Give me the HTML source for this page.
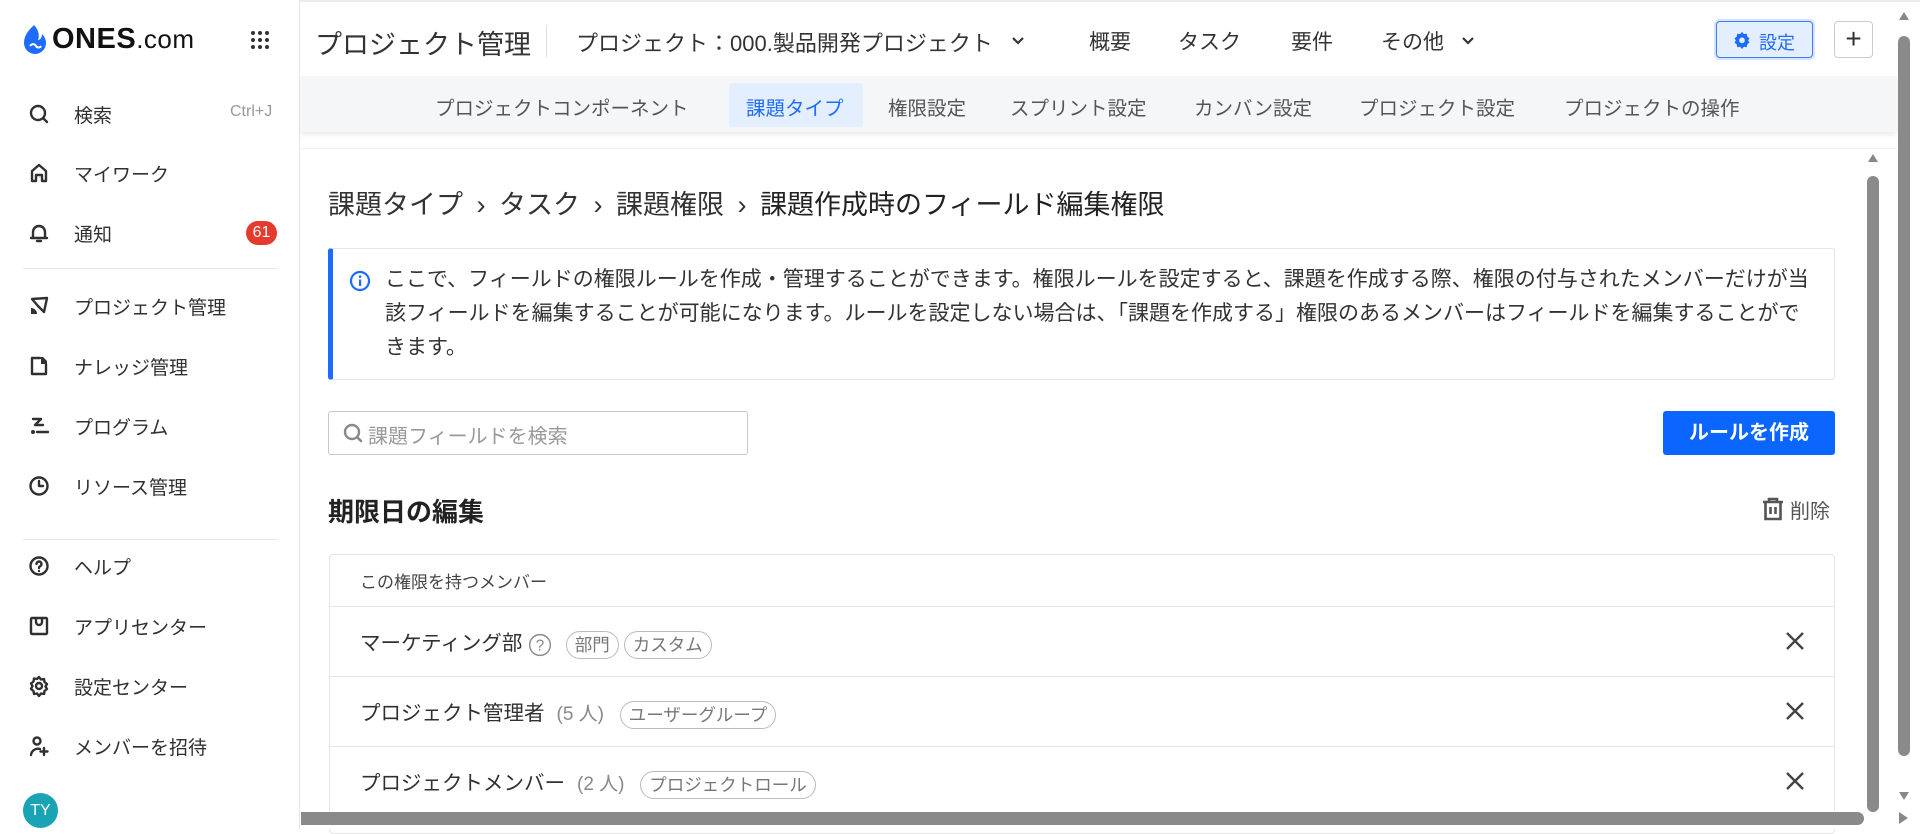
<!DOCTYPE html>
<html><head><meta charset="utf-8">
<style>
*{box-sizing:border-box;margin:0;padding:0}
body{width:1920px;height:829px;overflow:hidden;background:#fff;font-family:"Liberation Sans","Noto Sans CJK JP",sans-serif;color:#303030;position:relative}
.a{position:absolute;white-space:nowrap}
.side{left:0;top:0;width:300px;height:829px;border-right:1px solid #e6e6e6;background:#fff}
.nav{left:0;width:300px;height:40px;font-size:19px;color:#303030}
.nav svg{position:absolute;left:28px;top:9px}
.nav span{position:absolute;left:74px;top:7px}
.hr{height:1px;background:#e8e8e8}
.ic{stroke:#303030;stroke-width:2.4;fill:none;stroke-linecap:round;stroke-linejoin:round}
.sub{font-size:19.5px;color:#555;top:92px}
.row{left:329px;width:1506px;border-top:1px solid #e5e5e5;height:70px}
.tag{display:inline-block;border:1px solid #bbb;border-radius:14px;padding:0 8px;font-size:17.5px;color:#777;height:28px;line-height:26px;margin-left:5px;vertical-align:middle}
.cnt{color:#888;font-size:19px;margin-left:12px}
.x{position:absolute;right:30px;top:24px}
</style></head><body>
<div style="position:absolute;left:0;top:0;width:1920px;height:2px;background:#ececec"></div>
<!-- sidebar -->
<div class="a side">
  <svg class="a" style="left:22px;top:24px" width="28" height="32" viewBox="0 0 28 32"><path d="M12 1C7 6 2 11 2 19a11 11 0 0 0 22 0c0-4-2-7-4-9 0 4-2 6-4 6 2-5 0-11-4-15z" fill="#1e6bff"/><path d="M8 22c2-3 5-2 6 0 1 2 4 2 5 0" stroke="#fff" stroke-width="2" fill="none"/></svg>
  <div class="a" style="left:52px;top:23px;font-size:29px;font-weight:bold;color:#111;letter-spacing:0.5px">ONES<span style="font-weight:normal;font-size:26px">.com</span></div>
  <svg class="a" style="left:250px;top:30px" width="20" height="20" viewBox="0 0 20 20" fill="#333"><circle cx="3" cy="3" r="2"/><circle cx="10" cy="3" r="2"/><circle cx="17" cy="3" r="2"/><circle cx="3" cy="10" r="2"/><circle cx="10" cy="10" r="2"/><circle cx="17" cy="10" r="2"/><circle cx="3" cy="17" r="2"/><circle cx="10" cy="17" r="2"/><circle cx="17" cy="17" r="2"/></svg>

  <div class="a nav" style="top:94px"><svg width="22" height="22" viewBox="0 0 22 22"><circle class="ic" cx="10" cy="10" r="7"/><path class="ic" d="M15 15l4 4"/></svg><span>検索</span><span style="left:230px;top:9px;font-size:16px;color:#999">Ctrl+J</span></div>
  <div class="a nav" style="top:153px"><svg width="22" height="22" viewBox="0 0 22 22"><path class="ic" d="M4 19V9l7-6 7 6v10h-4v-6h-6v6z"/></svg><span>マイワーク</span></div>
  <div class="a nav" style="top:213px"><svg width="22" height="22" viewBox="0 0 22 22"><path class="ic" d="M5 16V10a6 6 0 0 1 12 0v6M3 16h16M9 19h4"/></svg><span>通知</span><div class="a" style="left:246px;top:8px;width:31px;height:24px;border-radius:12px;background:#e53b2f;color:#fff;font-size:16px;text-align:center;line-height:24px">61</div></div>
  <div class="a hr" style="left:23px;top:268px;width:255px"></div>
  <div class="a nav" style="top:286px"><svg width="22" height="22" viewBox="0 0 22 22"><path class="ic" d="M4 4l15-1-3 14-6-6z"/><path d="M3 13a6 6 0 0 1 6 6H3z" fill="#303030"/></svg><span>プロジェクト管理</span></div>
  <div class="a nav" style="top:346px"><svg width="22" height="22" viewBox="0 0 22 22"><path class="ic" d="M12 3H4v16h14V9"/><path d="M13 2h2l4 4v3h-6z" fill="#303030"/></svg><span>ナレッジ管理</span></div>
  <div class="a nav" style="top:406px"><svg width="22" height="22" viewBox="0 0 22 22"><path class="ic" d="M5 4h8l-6 6h8M9 17h11"/><circle cx="5" cy="17" r="2" fill="#303030"/></svg><span>プログラム</span></div>
  <div class="a nav" style="top:466px"><svg width="22" height="22" viewBox="0 0 22 22"><circle class="ic" cx="11" cy="11" r="8.5"/><path class="ic" d="M11 6v5h4"/></svg><span>リソース管理</span></div>
  <div class="a hr" style="left:23px;top:539px;width:255px"></div>
  <div class="a nav" style="top:546px"><svg width="22" height="22" viewBox="0 0 22 22"><circle class="ic" cx="11" cy="11" r="8.5"/><path class="ic" d="M8.5 9a2.5 2.5 0 1 1 3.5 2.3c-.7.4-1 .9-1 1.7"/><circle cx="11" cy="16" r="1.2" fill="#303030"/></svg><span>ヘルプ</span></div>
  <div class="a nav" style="top:606px"><svg width="22" height="22" viewBox="0 0 22 22"><rect class="ic" x="3" y="3" width="16" height="16" rx="1"/><path class="ic" d="M8 4v3a3 3 0 0 0 6 0V4"/></svg><span>アプリセンター</span></div>
  <div class="a nav" style="top:666px"><svg width="22" height="22" viewBox="0 0 22 22"><path class="ic" d="M11 2l2 2.5 3-.5.5 3 2.5 2-1.5 2.5 1.5 2.5-2.5 2-.5 3-3-.5-2 2.5-2-2.5-3 .5-.5-3-2.5-2L4.5 11 3 8.5l2.5-2 .5-3 3 .5z"/><circle class="ic" cx="11" cy="11" r="3"/></svg><span>設定センター</span></div>
  <div class="a nav" style="top:726px"><svg width="22" height="22" viewBox="0 0 22 22"><circle class="ic" cx="9" cy="6" r="3.5"/><path class="ic" d="M3 20a7 7 0 0 1 9-6M16 13v7M12.5 16.5h7"/></svg><span>メンバーを招待</span></div>
  <div class="a" style="left:23px;top:793px;width:35px;height:35px;border-radius:50%;background:#1aa3b5;color:#fff;font-size:16px;text-align:center;line-height:35px">TY</div>
</div>

<!-- top header -->
<div class="a" style="left:315px;top:23px;font-size:27px;color:#333">プロジェクト管理</div>
<div class="a" style="left:546px;top:25px;width:1px;height:32px;background:#ddd"></div>
<div class="a" style="left:576px;top:26px;font-size:22px;color:#333">プロジェクト：000.製品開発プロジェクト</div>
<svg class="a" style="left:1010px;top:32px" width="16" height="16" viewBox="0 0 16 16"><path d="M3 6l5 5 5-5" stroke="#333" stroke-width="2.2" fill="none"/></svg>
<div class="a" style="left:1089px;top:26px;font-size:21px;color:#333">概要</div>
<div class="a" style="left:1178px;top:26px;font-size:21px;color:#333">タスク</div>
<div class="a" style="left:1291px;top:26px;font-size:21px;color:#333">要件</div>
<div class="a" style="left:1381px;top:26px;font-size:21px;color:#333">その他</div>
<svg class="a" style="left:1460px;top:32px" width="16" height="16" viewBox="0 0 16 16"><path d="M3 6l5 5 5-5" stroke="#333" stroke-width="2.2" fill="none"/></svg>
<div class="a" style="left:1716px;top:21px;width:97px;height:37px;border:1.5px solid #3d7bf5;border-radius:4px;background:#e3eeff;box-shadow:0 0 0 2px #d4e4ff">
  <svg class="a" style="left:16px;top:9px" width="18" height="18" viewBox="0 0 22 22"><path d="M11 1l2.3 2.8 3.5-.6.6 3.5L20.2 9 18.5 11.5l1.7 2.5-2.8 2.3-.6 3.5-3.5-.6L11 22l-2.3-2.8-3.5.6-.6-3.5L1.8 14 3.5 11.5 1.8 9l2.8-2.3.6-3.5 3.5.6z" fill="#1e6bff"/><circle cx="11" cy="11.5" r="3.5" fill="#e3eeff"/></svg>
  <div class="a" style="left:42px;top:7px;font-size:18px;color:#1e6bff">設定</div>
</div>
<div class="a" style="left:1834px;top:21px;width:39px;height:37px;border:1px solid #ccc;border-radius:4px;font-size:28px;line-height:33px;text-align:center;color:#333">+</div>

<!-- sub nav -->
<div class="a" style="left:301px;top:76px;width:1596px;height:56px;background:#f5f6f8;box-shadow:0 3px 5px rgba(0,0,0,0.08)"></div>
<div class="a" style="left:729px;top:83px;width:134px;height:44px;background:#e3eeff;border-radius:3px"></div>
<div class="a sub" style="left:435px">プロジェクトコンポーネント</div>
<div class="a sub" style="left:746px;color:#1e6bff">課題タイプ</div>
<div class="a sub" style="left:888px">権限設定</div>
<div class="a sub" style="left:1010px">スプリント設定</div>
<div class="a sub" style="left:1194px">カンバン設定</div>
<div class="a sub" style="left:1359px">プロジェクト設定</div>
<div class="a sub" style="left:1564px">プロジェクトの操作</div>

<!-- content -->
<div class="a" style="left:301px;top:148px;width:1596px;height:1px;background:#eee"></div>
<div class="a" style="left:328px;top:183px;font-size:27px;color:#333">課題タイプ <span style="margin:0 6px">›</span> タスク <span style="margin:0 6px">›</span> 課題権限 <span style="margin:0 6px">›</span> <span style="color:#222">課題作成時のフィールド編集権限</span></div>

<div class="a" style="left:328px;top:248px;width:1507px;height:132px;border:1px solid #e4e4e4;border-left:5px solid #1e6bff;border-radius:3px"></div>
<svg class="a" style="left:349px;top:270px" width="22" height="22" viewBox="0 0 22 22"><circle cx="11" cy="11" r="9" stroke="#1e6bff" stroke-width="2.2" fill="none"/><rect x="10" y="9.5" width="2.2" height="6.5" fill="#1e6bff"/><circle cx="11.1" cy="6.6" r="1.3" fill="#1e6bff"/></svg>
<div class="a" style="left:385px;top:263px;width:1430px;white-space:normal;font-size:21px;line-height:34px;color:#333">ここで、フィールドの権限ルールを作成・管理することができます。権限ルールを設定すると、課題を作成する際、権限の付与されたメンバーだけが当該フィールドを編集することが可能になります。ルールを設定しない場合は、「課題を作成する」権限のあるメンバーはフィールドを編集することができます。</div>

<div class="a" style="left:328px;top:411px;width:420px;height:44px;border:1px solid #c8c8c8;border-radius:3px"></div>
<svg class="a" style="left:342px;top:422px" width="22" height="22" viewBox="0 0 22 22"><circle cx="10" cy="10" r="7" stroke="#888" stroke-width="2.4" fill="none"/><path d="M15 15l4 4" stroke="#888" stroke-width="2.6" stroke-linecap="round"/></svg>
<div class="a" style="left:368px;top:420px;font-size:20px;color:#999">課題フィールドを検索</div>

<div class="a" style="left:1663px;top:411px;width:172px;height:44px;background:#0a66ff;border-radius:3px;color:#fff;font-size:20px;font-weight:bold;text-align:center;line-height:44px">ルールを作成</div>

<div class="a" style="left:328px;top:492px;font-size:26px;color:#222;font-weight:bold">期限日の編集</div>
<svg class="a" style="left:1761px;top:497px" width="24" height="24" viewBox="0 0 24 24"><path d="M2 5h20M8 5V2h8v3M4.5 5v17h15V5M9.5 10v7M14.5 10v7" stroke="#555" stroke-width="2.6" fill="none"/></svg>
<div class="a" style="left:1790px;top:495px;font-size:20px;color:#555">削除</div>

<div class="a" style="left:329px;top:554px;width:1506px;height:280px;border:1px solid #e5e5e5;border-radius:4px"></div>
<div class="a" style="left:360px;top:568px;font-size:17px;color:#444">この権限を持つメンバー</div>
<div class="a row" style="top:606px"><div class="a" style="left:31px;top:19px;font-size:20.5px">マーケティング部 <svg style="vertical-align:middle" width="24" height="24" viewBox="0 0 22 22"><circle cx="11" cy="11" r="9.5" stroke="#888" stroke-width="1.3" fill="none"/><text x="11" y="16" font-size="14" text-anchor="middle" fill="#888" font-family="Liberation Sans">?</text></svg> <span class="tag" style="margin-left:8px">部門</span><span class="tag">カスタム</span></div><svg class="x" width="20" height="20" viewBox="0 0 20 20"><path d="M2 2l16 16M18 2L2 18" stroke="#444" stroke-width="2.4"/></svg></div>
<div class="a row" style="top:676px"><div class="a" style="left:31px;top:19px;font-size:20.5px">プロジェクト管理者<span class="cnt">(5 人)</span> <span class="tag" style="margin-left:10px">ユーザーグループ</span></div><svg class="x" width="20" height="20" viewBox="0 0 20 20"><path d="M2 2l16 16M18 2L2 18" stroke="#444" stroke-width="2.4"/></svg></div>
<div class="a row" style="top:746px"><div class="a" style="left:31px;top:19px;font-size:20.5px">プロジェクトメンバー<span class="cnt">(2 人)</span> <span class="tag" style="margin-left:10px">プロジェクトロール</span></div><svg class="x" width="20" height="20" viewBox="0 0 20 20"><path d="M2 2l16 16M18 2L2 18" stroke="#444" stroke-width="2.4"/></svg></div>

<!-- scrollbars -->
<div class="a" style="left:1863px;top:150px;width:18px;height:664px;background:#fff"></div>
<div class="a" style="left:1868px;top:154px;width:0;height:0;border-left:5px solid transparent;border-right:5px solid transparent;border-bottom:8px solid #888"></div>
<div class="a" style="left:1867px;top:176px;width:12px;height:636px;background:#8a8a8a;border-radius:6px"></div>
<div class="a" style="left:301px;top:811px;width:1566px;height:18px;background:#fff"></div>
<div class="a" style="left:301px;top:812px;width:1563px;height:13px;background:#8a8a8a;border-radius:0 7px 7px 0"></div>
<div class="a" style="left:1899px;top:12px;width:0;height:0;border-left:5px solid transparent;border-right:5px solid transparent;border-bottom:8px solid #888"></div>
<div class="a" style="left:1898px;top:36px;width:12px;height:720px;background:#8a8a8a;border-radius:6px"></div>
<div class="a" style="left:1899px;top:792px;width:0;height:0;border-left:5px solid transparent;border-right:5px solid transparent;border-top:8px solid #888"></div>
<div class="a" style="left:1899px;top:812px;width:0;height:0;border-top:6px solid transparent;border-bottom:6px solid transparent;border-left:9px solid #888"></div>
</body></html>
